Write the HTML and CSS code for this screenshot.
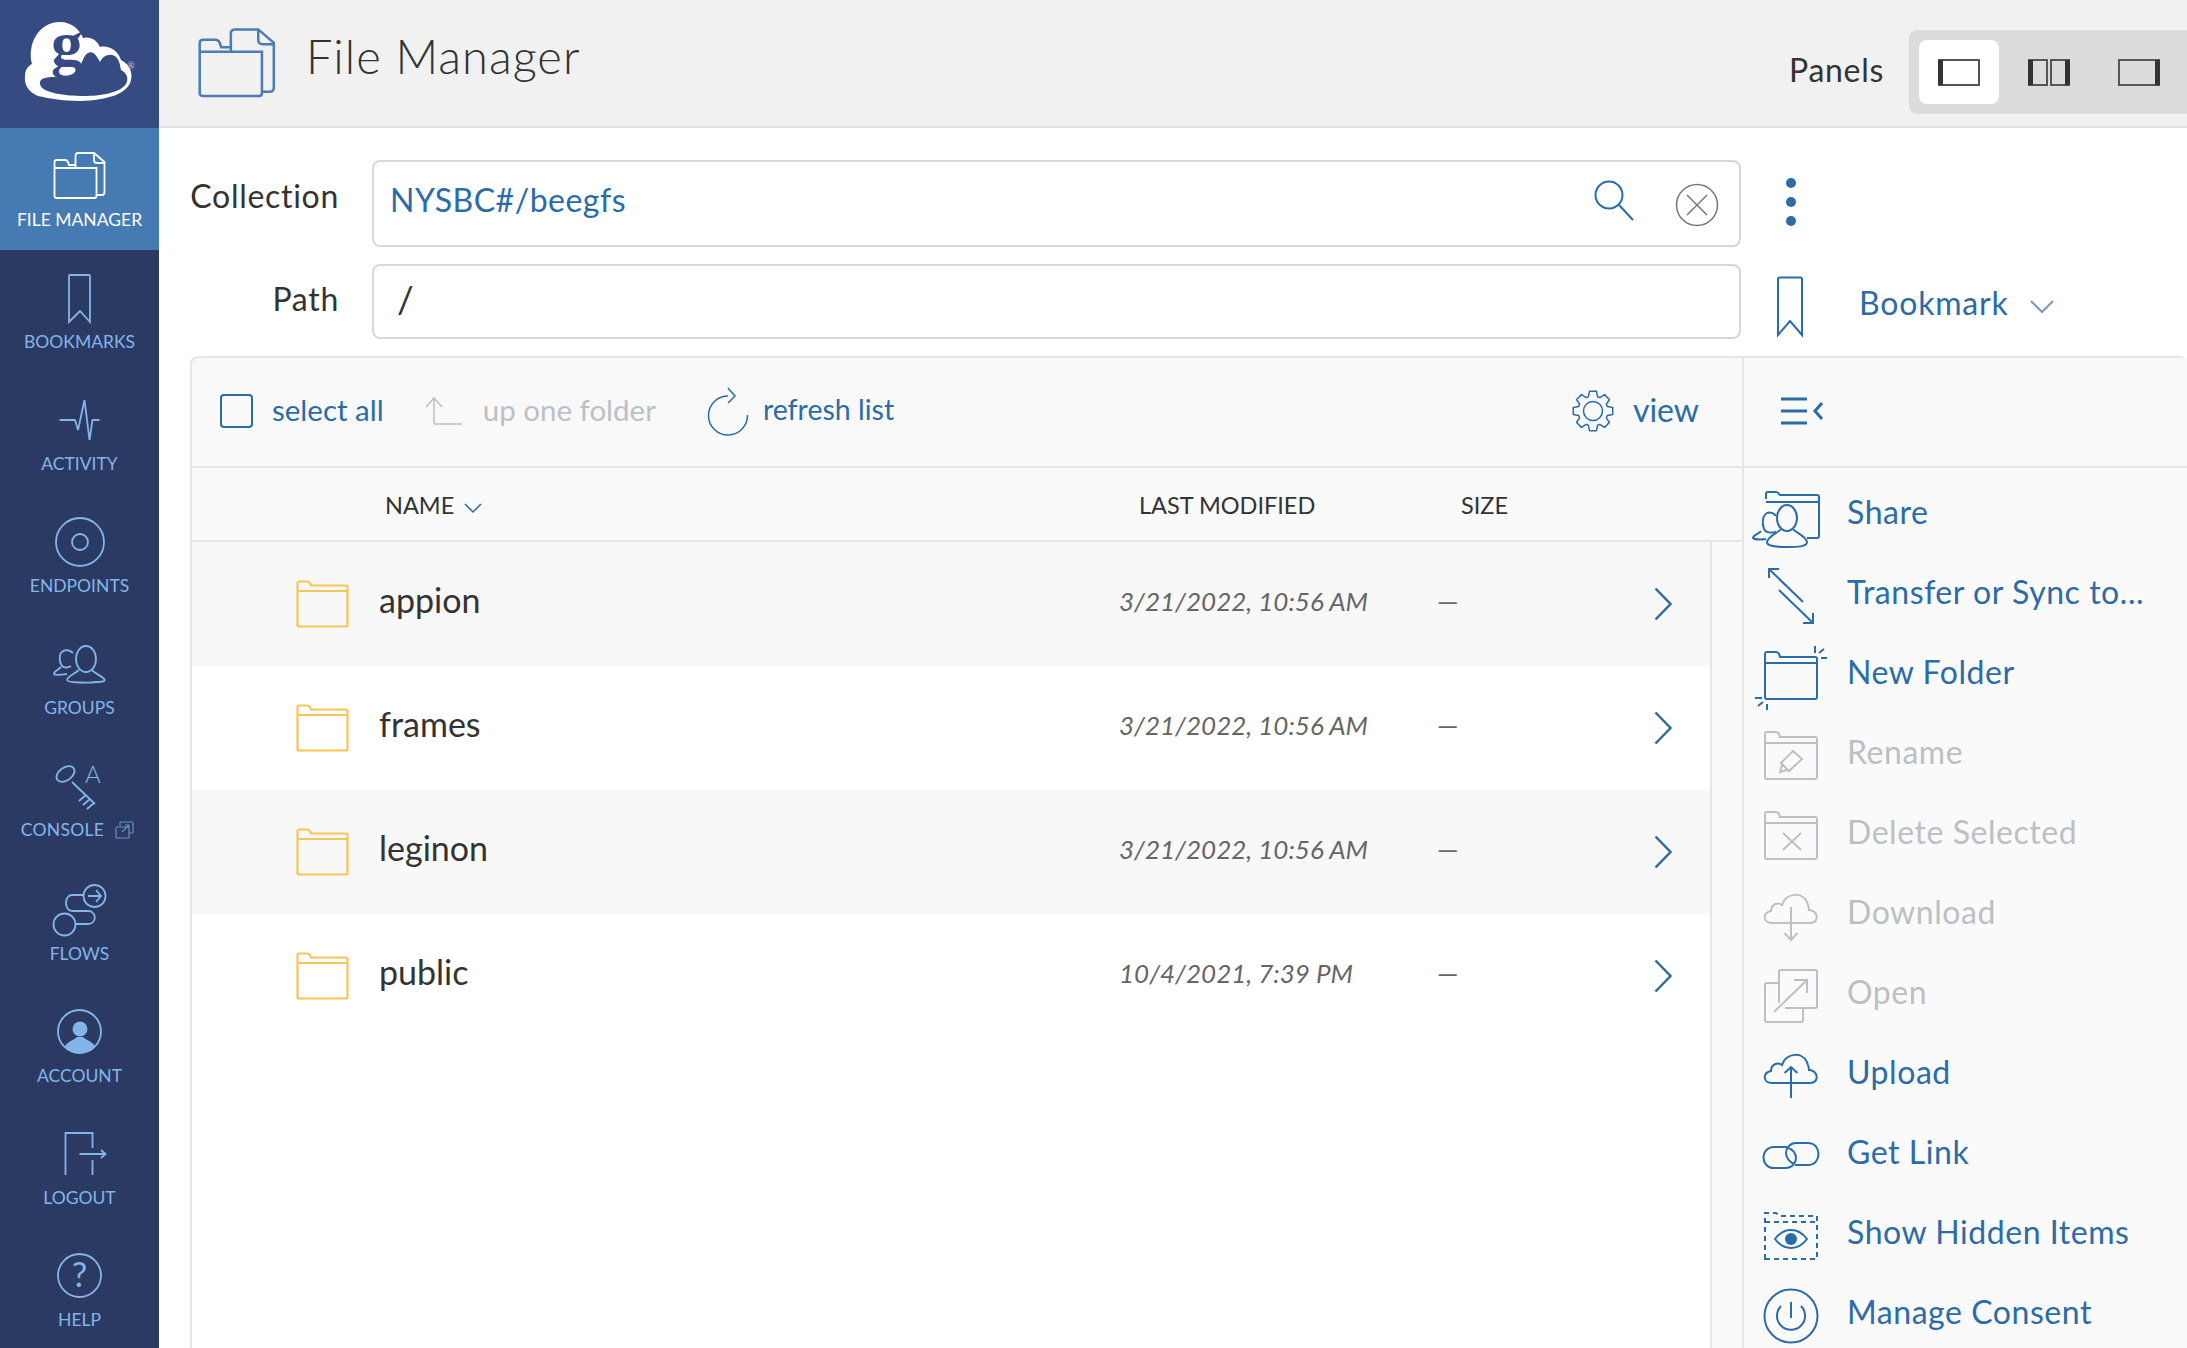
FILE: index.html
```html
<!DOCTYPE html>
<html lang="en">
<head>
  <meta charset="UTF-8">
  <title>File Manager</title>
  <link rel="stylesheet" href="styles.css">
</head>
<body>
  <svg class="defs" aria-hidden="true">
    <symbol id="file-manager" viewBox="0 0 60 56">
      <path d="M4.5 48V14Q4.5 12 7 12H15Q17 12 18 14L19 17H25.5M4.5 20H46.5V48Q46.5 50 44 50H7Q4.5 50 4.5 48Z"/>
      <path d="M25.5 20V8Q25.5 5 28 5H44L54.5 14V44Q54.5 47 52 47H46.5M44 5V12Q44 15 47 15H54.5"/>
    </symbol>
    <symbol id="folder" viewBox="0 0 80 64">
      <path d="M14 20V13Q14 11 16 11H25Q27 11 28 13L29 16H64Q66 16 66 18V56Q66 58 64 58H16Q14 58 14 56ZM14 22H66"/>
    </symbol>
    <symbol id="cloud" viewBox="0 0 80 64">
      <path d="M21 42C12 42 11 32 20 30C20 23 27 21 31 24C34 12 53 9 57 24C58 27 58 28 58 29C67 29 69 42 59 42Z"/>
    </symbol>
    <symbol id="row-folder" viewBox="0 0 53 48">
      <path d="M1.5 9V3Q1.5 1.5 3 1.5H11Q13 1.5 14 3L15 5.5H50Q51.5 5.5 51.5 7V45Q51.5 46.5 50 46.5H3Q1.5 46.5 1.5 45ZM1.5 11H51.5"/>
    </symbol>
  </svg>

  <div class="app">
    <aside class="sidebar">
      <div class="logo">
        <svg viewBox="0 0 159 128" width="159" height="128">
          <path fill="#fff" d="M32 64C27 45 38 22 60 22C72 22 80 30 83 38C90 36 97 40 100 47C108 45 118 50 121 60C129 64 133 72 131 80C128 94 108 100 80 101C62 101 48 98 38 96C28 92 24 84 25 76C25 70 28 66 32 64Z"/>
          <path fill="#354b82" d="M40 84C39 78 46 77 55 77C63 78 72 76 78 70C82 64 83 56 88 53C93 50 97 56 100 62C103 55 112 52 117 58C120 62 120 66 121 70C127 73 129 79 126 84C120 93 100 96 84 96C66 96 41 93 40 84Z"/>
          <text class="logo-g" x="51" y="65">g</text>
          <text class="logo-r" x="127" y="69">®</text>
        </svg>
      </div>
      <a class="nav-item active" href="#">
        <svg class="nav-icon"><use href="#file-manager"/></svg>
        <span>FILE MANAGER</span>
      </a>
      <a class="nav-item" href="#">
        <svg class="nav-icon" viewBox="0 0 60 56"><path d="M19 6Q19 5 20 5H39Q40 5 40 6V52L30 41L19 52Z"/></svg>
        <span>BOOKMARKS</span>
      </a>
      <a class="nav-item" href="#">
        <svg class="nav-icon" viewBox="0 0 60 56"><path d="M9.5 28H25L28 38L34.5 8L39.5 48L42.5 28H49.5"/></svg>
        <span>ACTIVITY</span>
      </a>
      <a class="nav-item" href="#">
        <svg class="nav-icon" viewBox="0 0 60 56"><circle cx="30" cy="28" r="24"/><circle cx="30" cy="28" r="8"/></svg>
        <span>ENDPOINTS</span>
      </a>
      <a class="nav-item" href="#">
        <svg class="nav-icon" viewBox="0 0 60 56">
          <ellipse cx="36" cy="23" rx="10" ry="13"/>
          <path d="M29 34C24 38 17 41 17 44C17 47 40 47 46 46C56 46 56 44 53 42C50 39 44 37 42 34"/>
          <path d="M21 30C18 32 14 32 12 30C9 26 9 18 12 16C15 13 20 14 23 17"/>
          <path d="M11 31C8 34 3 36 4 38C5 39 10 39 17 38"/>
        </svg>
        <span>GROUPS</span>
      </a>
      <a class="nav-item" href="#">
        <svg class="nav-icon" viewBox="0 0 60 56">
          <ellipse cx="15.5" cy="16" rx="10" ry="6.5" transform="rotate(-35 15.5 16)"/>
          <path d="M22 24L45 46M36 37L29 43M40 41L33 47M44 45L37 51"/>
          <text class="icon-glyph" x="35" y="25">A</text>
        </svg>
        <span class="console-label">CONSOLE
          <svg class="external" viewBox="0 0 19 18"><path d="M5 5V2Q5 1 6 1H17Q18 1 18 2V11Q18 12 17 12H14M1 7Q1 6 2 6H13Q14 6 14 7V16Q14 17 13 17H2Q1 17 1 16ZM7 11L14 4M10 4H14V8"/></svg>
        </span>
      </a>
      <a class="nav-item low" href="#">
        <svg class="nav-icon" viewBox="0 0 60 56">
          <circle cx="44.5" cy="16" r="11"/>
          <circle cx="14.5" cy="44.5" r="11"/>
          <path d="M33.5 15H22C14 15 14 31 22 31H38C47 31 47 44 38 44H25.5M38 16H51M46 10L51 16L46 22"/>
        </svg>
        <span>FLOWS</span>
      </a>
      <a class="nav-item low" href="#">
        <svg class="nav-icon" viewBox="0 0 60 56">
          <circle cx="29.5" cy="29.5" r="21.5"/>
          <circle class="solid" cx="30" cy="27" r="7.5"/>
          <path class="solid" d="M15 45C16 40 24 38 27 35H33C36 38 44 40 45 45C40 53 20 53 15 45Z"/>
        </svg>
        <span>ACCOUNT</span>
      </a>
      <a class="nav-item low" href="#">
        <svg class="nav-icon" viewBox="0 0 60 56"><path d="M15.5 51V9H42.5V24M42.5 36V51M29.5 30H55.5M51 26L55.5 30L51 34"/></svg>
        <span>LOGOUT</span>
      </a>
      <a class="nav-item low" href="#">
        <svg class="nav-icon" viewBox="0 0 60 56">
          <circle cx="29.5" cy="29.5" r="21.5"/>
          <text class="icon-glyph help-mark" x="29.5" y="41">?</text>
        </svg>
        <span>HELP</span>
      </a>
    </aside>

    <main class="main">
      <header class="page-header">
        <svg class="title-icon"><use href="#file-manager"/></svg>
        <h1>File Manager</h1>
        <div class="panels">
          <span class="panels-label">Panels</span>
          <div class="panel-group">
            <button class="panel-btn selected">
              <svg viewBox="0 0 42 27"><path class="thin" d="M1 1H41V26H1Z"/><path class="thick" d="M2.5 1V26"/></svg>
            </button>
            <button class="panel-btn">
              <svg viewBox="0 0 42 27"><path class="thin" d="M1 1H19V26H1ZM23 1H41V26H23Z"/><path class="thick" d="M2.5 1V26M39.5 1V26"/></svg>
            </button>
            <button class="panel-btn">
              <svg viewBox="0 0 42 27"><path class="thin" d="M1 1H41V26H1Z"/><path class="thick" d="M39.5 1V26"/></svg>
            </button>
          </div>
        </div>
      </header>

      <section class="location">
        <label class="field-label label-collection">Collection</label>
        <div class="field field-collection">
          <span class="collection-name">NYSBC#/beegfs</span>
          <svg class="search-icon" viewBox="0 0 40 40"><circle cx="15" cy="14" r="13.5"/><path d="M25 24L39 39"/></svg>
          <svg class="clear-icon" viewBox="0 0 44 44"><circle cx="22" cy="22" r="20.5"/><path d="M12 12L32 32M32 12L12 32"/></svg>
        </div>
        <div class="dots"><i></i><i></i><i></i></div>
        <label class="field-label label-path">Path</label>
        <div class="field field-path">/</div>
        <div class="bookmark">
          <svg class="bookmark-icon" viewBox="0 0 28 62"><path d="M2 3Q2 1.500 3.500 1.500H24.500Q26 1.500 26 3V59L14 45L2 59Z"/></svg>
          <span class="bookmark-text">Bookmark</span>
          <svg class="bookmark-caret" viewBox="0 0 24 14"><path d="M1 1L12 12L23 1"/></svg>
        </div>
      </section>

      <section class="browser">
        <div class="files">
          <div class="toolbar">
            <span class="checkbox"></span>
            <a class="tool select-all"><span class="tool-text">select all</span></a>
            <span class="tool up-one disabled">
              <svg viewBox="0 0 38 30"><path d="M9 28V2M1 11L9 2L17 11M9 28H37"/></svg>
              <span class="tool-text">up one folder</span>
            </span>
            <a class="tool refresh">
              <svg viewBox="0 0 44 50"><path d="M22 10A19.500 19.500 0 1 0 41.500 29M22 2L29 10L22 17"/></svg>
              <span class="tool-text">refresh list</span>
            </a>
            <a class="tool view">
              <svg viewBox="0 0 44 44"><polygon points="17.400,7.700 18.500,2.300 25.500,2.300 26.600,7.700 28.800,8.600 33.500,5.600 38.400,10.500 35.400,15.200 36.300,17.400 41.700,18.500 41.700,25.500 36.300,26.600 35.400,28.800 38.400,33.500 33.500,38.400 28.800,35.400 26.600,36.300 25.500,41.700 18.500,41.700 17.400,36.300 15.200,35.400 10.500,38.400 5.600,33.500 8.600,28.800 7.700,26.600 2.300,25.500 2.300,18.500 7.700,17.400 8.600,15.200 5.600,10.500 10.500,5.600 15.200,8.600"/><circle cx="22" cy="22" r="9.500"/></svg>
              <span class="tool-text">view</span>
            </a>
          </div>
          <div class="columns">
            <span class="col-name">NAME <svg class="sort-caret" viewBox="0 0 18 10"><path d="M1 1L9 9L17 1"/></svg></span>
            <span>LAST MODIFIED</span>
            <span>SIZE</span>
          </div>
          <div class="list-wrap">
            <div class="list">
              <div class="row">
                <svg class="row-folder"><use href="#row-folder"/></svg>
                <span class="row-name">appion</span>
                <span class="row-date">3/21/2022, 10:56 AM</span>
                <span class="row-size">—</span>
                <svg class="row-next" viewBox="0 0 18 34"><path d="M1.500 1.500L16.500 17L1.500 32.500"/></svg>
              </div>
              <div class="row">
                <svg class="row-folder"><use href="#row-folder"/></svg>
                <span class="row-name">frames</span>
                <span class="row-date">3/21/2022, 10:56 AM</span>
                <span class="row-size">—</span>
                <svg class="row-next" viewBox="0 0 18 34"><path d="M1.500 1.500L16.500 17L1.500 32.500"/></svg>
              </div>
              <div class="row">
                <svg class="row-folder"><use href="#row-folder"/></svg>
                <span class="row-name">leginon</span>
                <span class="row-date">3/21/2022, 10:56 AM</span>
                <span class="row-size">—</span>
                <svg class="row-next" viewBox="0 0 18 34"><path d="M1.500 1.500L16.500 17L1.500 32.500"/></svg>
              </div>
              <div class="row">
                <svg class="row-folder"><use href="#row-folder"/></svg>
                <span class="row-name">public</span>
                <span class="row-date">10/4/2021, 7:39 PM</span>
                <span class="row-size">—</span>
                <svg class="row-next" viewBox="0 0 18 34"><path d="M1.500 1.500L16.500 17L1.500 32.500"/></svg>
              </div>
            </div>
          </div>
        </div>

        <div class="actions">
          <div class="actions-head">
            <svg class="collapse-icon" viewBox="0 0 44 30"><path d="M1 2H27M1 14H27M1 26H27"/><path d="M42 6L35 14L42 22"/></svg>
          </div>
          <ul class="action-list">
            <li class="action">
              <svg viewBox="0 0 80 64"><path d="M15 18V13Q15 11 17 11H25Q27 11 28 13L29 14H66Q68 14 68 16V55Q68 57 66 57H56M15 21H68"/><ellipse cx="36" cy="37" rx="10" ry="13"/><path d="M30 48C27 52 17 55 16 61C16 66 28 66 36 66C46 66 56 66 56 61C55 55 45 52 42 48"/><path d="M25 51C21 52 15 52 13 48C11 43 11 35 16 32C19 31 23 32 25 35"/><path d="M10 50C8 53 2 54 2 57C3 58 8 59 15 58"/></svg>
              <span>Share</span>
            </li>
            <li class="action">
              <svg viewBox="0 0 80 64"><path d="M18 8L52 41M28 8H18V17M28 29L62 62M62 52V62H52"/></svg>
              <span>Transfer or Sync to...</span>
            </li>
            <li class="action">
              <svg viewBox="0 0 80 64"><use href="#folder"/><path d="M64 5V12M68 12L73 8M70 17H76M4 57H11M7 65L12 61M16 63V69"/></svg>
              <span>New Folder</span>
            </li>
            <li class="action disabled">
              <svg viewBox="0 0 80 64"><use href="#folder"/><path d="M42 30L51 38L38 50L30 42ZM31 44L29 51L36 49"/></svg>
              <span>Rename</span>
            </li>
            <li class="action disabled">
              <svg viewBox="0 0 80 64"><use href="#folder"/><path d="M32 32L50 49M50 32L32 49"/></svg>
              <span>Delete Selected</span>
            </li>
            <li class="action disabled">
              <svg viewBox="0 0 80 64"><use href="#cloud"/><path d="M40 26V59M33.500 52L40 59L46.500 52"/></svg>
              <span>Download</span>
            </li>
            <li class="action disabled">
              <svg viewBox="0 0 80 64"><path d="M28 22H16Q14 22 14 24V59Q14 61 16 61H50Q52 61 52 59V47"/><path d="M28 42V11Q28 9 30 9H64Q66 9 66 11V45Q66 47 64 47H34"/><path d="M23 51L56 19M43 19H56V32"/></svg>
              <span>Open</span>
            </li>
            <li class="action">
              <svg viewBox="0 0 80 64"><use href="#cloud"/><path d="M40 26V57M33.500 32L40 26L46.500 32"/></svg>
              <span>Upload</span>
            </li>
            <li class="action">
              <svg viewBox="0 0 80 64"><path d="M36 26H23C9 26 9 47 23 47H35C41 47 45 42 45 37C45 33 42 28 37 27"/><path d="M44 44H57C71 44 71 22 57 22H45C39 22 35 27 35 32C35 36 38 41 43 43"/></svg>
              <span>Get Link</span>
            </li>
            <li class="action">
              <svg viewBox="0 0 80 64"><path class="dashed" d="M14 58V12H25L29 15H66V58ZM14 21H66"/><path d="M24 38C33 26 47 26 56 38C47 50 33 50 24 38Z"/><circle class="solid" cx="40" cy="38" r="6"/></svg>
              <span>Show Hidden Items</span>
            </li>
            <li class="action">
              <svg viewBox="0 0 80 64"><circle cx="40" cy="35" r="26.500"/><path d="M30 25A14 14 0 1 0 50 25M40 21V37"/></svg>
              <span>Manage Consent</span>
            </li>
          </ul>
        </div>
      </section>
    </main>
  </div>
</body>
</html>
```

FILE: styles.css
```css
:root {
  --sidebar: #2b3a63;
  --logo-bg: #354b82;
  --active: #467ab2;
  --nav-text: #83b5e8;
  --blue: #2b6ca8;
  --muted: #bcc0c5;
  --text: #333;
  --line: #e3e6ea;
  --panel: #f9f9f9;
}

* {
  margin: 0;
  padding: 0;
  box-sizing: border-box;
}

body {
  font-family: Lato, "Liberation Sans", sans-serif;
  color: var(--text);
  background: #fff;
  overflow: hidden;
}

a {
  text-decoration: none;
  color: inherit;
}

svg {
  fill: none;
  stroke: currentColor;
  overflow: visible;
  flex-shrink: 0;
}

.defs {
  position: absolute;
  width: 0;
  height: 0;
}

.app {
  display: flex;
  height: 1348px;
  overflow: hidden;
}

/* sidebar */
.sidebar {
  width: 159px;
  flex-shrink: 0;
  background: var(--sidebar);
}

.logo {
  height: 128px;
  background: var(--logo-bg);
}

.logo svg {
  display: block;
  stroke: none;
}

.logo-g {
  font-family: "Liberation Serif", serif;
  font-weight: 700;
  font-size: 64px;
  fill: var(--logo-bg);
}

.logo-r {
  font-size: 9px;
  fill: #c4ccdc;
}

.nav-item {
  display: flex;
  flex-direction: column;
  align-items: center;
  height: 122px;
  padding-top: 20px;
  color: var(--nav-text);
  font-size: 17.5px;
  line-height: 22px;
}

.nav-item.active {
  background: var(--active);
  color: #fff;
}

.nav-item.low span {
  margin-top: 2px;
}

.nav-icon {
  width: 60px;
  height: 56px;
  margin-bottom: 5px;
  stroke-width: 1.8;
}

.icon-glyph {
  font-family: Lato, sans-serif;
  font-size: 24px;
  font-weight: 300;
  fill: currentColor;
  stroke: none;
}

.help-mark {
  font-size: 34px;
  font-weight: 400;
  text-anchor: middle;
}

.solid {
  fill: currentColor;
  stroke: none;
}

.console-label {
  white-space: nowrap;
  display: flex;
  align-items: center;
  gap: 11px;
  margin-left: -4px;
  letter-spacing: 0.3px;
}

.external {
  width: 19px;
  height: 18px;
  stroke-width: 1.2;
  opacity: 0.7;
}

/* header */
.main {
  flex: 1;
  min-width: 0;
  display: flex;
  flex-direction: column;
}

.page-header {
  height: 128px;
  flex-shrink: 0;
  display: flex;
  align-items: center;
  background: #f1f1f1;
  border-bottom: 2px solid #e2e2e2;
  padding-left: 34px;
}

.title-icon {
  width: 89px;
  height: 83px;
  margin-right: 24px;
  color: #4a7db5;
  stroke-width: 1.7;
}

h1 {
  font-size: 47px;
  font-weight: 300;
  letter-spacing: 1px;
  margin-top: -14px;
}

.panels {
  display: flex;
  align-items: center;
  margin-left: auto;
  margin-top: 18px;
}

.panels-label {
  font-size: 32px;
  margin-right: 25px;
  margin-top: -6px;
  letter-spacing: 0.7px;
}

.panel-group {
  display: flex;
  width: 278px;
  height: 84px;
  padding: 10px;
  background: #dcdcdc;
  border-radius: 8px 0 0 8px;
}

.panel-btn {
  width: 80px;
  height: 64px;
  flex-shrink: 0;
  margin-right: 10px;
  border: 0;
  border-radius: 8px;
  background: none;
  display: flex;
  align-items: center;
  justify-content: center;
  color: #333;
}

.panel-btn.selected {
  background: #fff;
}

.panel-btn svg {
  width: 42px;
  height: 27px;
}

.thin {
  stroke-width: 2;
  stroke: #555;
}

.thick {
  stroke-width: 5;
}

/* collection and path */
.location {
  display: grid;
  grid-template-columns: 149px 1369px 1fr;
  grid-template-rows: 87px 75px;
  column-gap: 33px;
  row-gap: 17px;
  padding: 32px 0 17px 31px;
}

.field-label {
  font-size: 32px;
  text-align: right;
  letter-spacing: 0.7px;
}

.label-collection {
  padding-top: 16px;
}

.label-path {
  padding-top: 15px;
}

.field {
  border: 2px solid #d5d8dc;
  border-radius: 8px;
  background: #fff;
  font-size: 32px;
}

.field-collection {
  display: flex;
  align-items: center;
  padding: 0 20px 0 16px;
}

.collection-name {
  color: var(--blue);
  letter-spacing: 0.5px;
  margin-top: -8px;
}

.search-icon {
  width: 40px;
  height: 40px;
  margin-left: auto;
  margin-top: -6px;
  color: var(--blue);
  stroke-width: 2;
}

.clear-icon {
  width: 44px;
  height: 44px;
  margin-left: 41px;
  margin-top: 2px;
  color: #777;
  stroke-width: 1.5;
}

.field-path {
  padding: 10px 0 0 23px;
  font-size: 37px;
}

.dots {
  display: flex;
  flex-direction: column;
  gap: 9px;
  margin: 18px 0 0 12px;
}

.dots i {
  width: 10px;
  height: 10px;
  border-radius: 50%;
  background: var(--blue);
}

.bookmark {
  display: flex;
  align-items: center;
  margin-left: 2px;
  color: var(--blue);
  padding-top: 10px;
}

.bookmark-icon {
  width: 28px;
  height: 62px;
  stroke-width: 2;
}

.bookmark-text {
  font-size: 32px;
  margin-left: 55px;
  letter-spacing: 0.8px;
  margin-top: -8px;
}

.bookmark-caret {
  width: 24px;
  height: 14px;
  margin-left: 21px;
  color: #7f92c9;
  stroke-width: 2;
}

/* file browser */
.browser {
  flex: 1;
  min-height: 0;
  display: flex;
  margin-left: 31px;
  border: 2px solid var(--line);
  border-bottom: 0;
  border-right: 0;
  border-radius: 8px 8px 0 0;
  background: var(--panel);
}

.files {
  width: 1552px;
  flex-shrink: 0;
  display: flex;
  flex-direction: column;
  border-right: 2px solid var(--line);
}

.toolbar {
  height: 110px;
  flex-shrink: 0;
  display: flex;
  align-items: center;
  padding: 0 43px 2px 28px;
  border-bottom: 2px solid var(--line);
  font-size: 29.5px;
  color: var(--blue);
}

.checkbox {
  width: 33px;
  height: 34px;
  border: 2px solid var(--blue);
  border-radius: 4px;
}

.tool {
  display: flex;
  align-items: center;
}

.tool-text {
  margin-top: -4px;
}

.select-all {
  margin-left: 19px;
}

.up-one {
  margin-left: 41px;
  color: var(--muted);
}

.up-one svg {
  width: 38px;
  height: 30px;
  margin-right: 20px;
  stroke-width: 1.5;
}

.refresh {
  margin-left: 50px;
  font-size: 28.5px;
}

.refresh svg {
  width: 44px;
  height: 50px;
  margin-right: 13px;
  stroke-width: 1.5;
}

.view {
  margin-left: auto;
  font-size: 32px;
}

.view svg {
  width: 44px;
  height: 44px;
  margin-right: 18px;
  stroke-width: 1.5;
  stroke-linejoin: round;
}

.columns {
  height: 74px;
  flex-shrink: 0;
  display: grid;
  grid-template-columns: 947px 322px 1fr;
  align-items: center;
  padding-top: 2px;
  border-bottom: 2px solid var(--line);
  font-size: 23.5px;
  white-space: nowrap;
}

.col-name {
  padding-left: 193px;
  display: flex;
  align-items: center;
  gap: 10px;
}

.sort-caret {
  width: 18px;
  height: 10px;
  margin-top: 5px;
  color: var(--blue);
  stroke-width: 1.5;
}

.list-wrap {
  flex: 1;
  min-height: 0;
}

.list {
  width: 1520px;
  height: 100%;
  background: #fff;
  border-right: 2px solid #e6e6e6;
}

.row {
  height: 124px;
  display: grid;
  grid-template-columns: 187px 740px 319px 216px 18px;
  align-items: center;
}

.row:nth-child(odd) {
  background: #f8f8f8;
}

.row-folder {
  width: 53px;
  height: 48px;
  margin-left: 104px;
  color: #f5c55a;
  stroke-width: 2.2;
}

.row-name {
  font-size: 34px;
  margin-top: -9px;
}

.row-date {
  font-size: 26px;
  font-style: italic;
  color: #666;
  margin-top: -7px;
}

.row-size {
  font-size: 27px;
  color: #666;
  margin-top: -8px;
  margin-left: -1px;
}

.row-next {
  width: 18px;
  height: 34px;
  color: var(--blue);
  stroke-width: 2.5;
}

/* right panel */
.actions {
  flex: 1;
  min-width: 0;
  background: #fafafa;
}

.actions-head {
  height: 110px;
  display: flex;
  align-items: center;
  padding-left: 36px;
  border-bottom: 2px solid var(--line);
  background: var(--panel);
}

.collapse-icon {
  width: 44px;
  height: 30px;
  color: var(--blue);
  stroke-width: 3;
}

.action-list {
  list-style: none;
  padding-top: 5px;
}

.action {
  height: 80px;
  display: flex;
  align-items: center;
  padding-left: 7px;
  font-size: 32px;
  color: var(--blue);
  letter-spacing: 0.55px;
}

.action span {
  margin-top: -4px;
}

.action svg {
  width: 80px;
  height: 64px;
  margin-right: 16px;
  stroke-width: 2;
}

.action.disabled {
  color: var(--muted);
}

.dashed {
  stroke-dasharray: 5 4;
}
```
